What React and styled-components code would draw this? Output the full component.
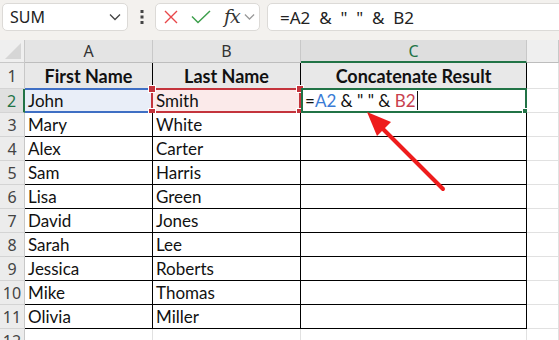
import styled, { createGlobalStyle } from 'styled-components'

const GlobalStyle = createGlobalStyle`
    html, body {
        margin: 0;
        padding: 0;
        background: #ffffff;
        overflow: hidden;
    }
    body {
        font-family: 'Noto Sans', 'Open Sans', sans-serif;
    }
`

const people = [
    ['John', 'Smith'],
    ['Mary', 'White'],
    ['Alex', 'Carter'],
    ['Sam', 'Harris'],
    ['Lisa', 'Green'],
    ['David', 'Jones'],
    ['Sarah', 'Lee'],
    ['Jessica', 'Roberts'],
    ['Mike', 'Thomas'],
    ['Olivia', 'Miller'],
]

const Chevron = ({ color = '#444', size = 12 }) => (
    <svg width={size} height={size / 2 + 2} viewBox='0 0 12 8'>
        <path d='M1 1.5 L6 6.5 L11 1.5' fill='none' stroke={color} strokeWidth='1.3' />
    </svg>
)

export default function App() {
    return (
        <Page>
            <GlobalStyle />
            <Toolbar>
                <NameBox>
                    <span>SUM</span>
                    <Chevron />
                </NameBox>
                <Dots>
                    <svg width='4' height='16' viewBox='0 0 4 16'>
                        <rect x='0.5' y='1' width='3' height='3' fill='#444' />
                        <rect x='0.5' y='6.5' width='3' height='3' fill='#444' />
                        <rect x='0.5' y='12' width='3' height='3' fill='#444' />
                    </svg>
                </Dots>
                <FxGroup>
                    <svg width='16' height='16' viewBox='0 0 16 16'>
                        <path d='M2 2 L14 14 M14 2 L2 14' stroke='#e8474a' strokeWidth='1.4' />
                    </svg>
                    <svg width='20' height='14' viewBox='0 0 20 14'>
                        <path d='M1 6.5 L7 12.5 L19 1' fill='none' stroke='#3d9f4c' strokeWidth='1.5' />
                    </svg>
                    <FxLabel>fx</FxLabel>
                    <Chevron color='#999' size={11} />
                </FxGroup>
                <FormulaInput>=A2  &amp;  "  "  &amp;  B2</FormulaInput>
            </Toolbar>

            <Sheet>
                <Corner>
                    <svg width='16' height='16' viewBox='0 0 16 16'>
                        <path d='M16 0 L16 16 L0 16 Z' fill='#d6d6d6' />
                    </svg>
                </Corner>
                <ColHead>A</ColHead>
                <ColHead>B</ColHead>
                <ColHead $active>C</ColHead>
                <ColHead $outside />

                <RowHead>1</RowHead>
                <HeadCell>First Name</HeadCell>
                <HeadCell>Last Name</HeadCell>
                <HeadCell>Concatenate Result</HeadCell>
                <Cell $outside />

                {people.map(([first, last], i) => {
                    const row = i + 2
                    const current = row === 2
                    return [
                        <RowHead key={`h${row}`} $active={current}>{row}</RowHead>,
                        <Cell key={`a${row}`} $fill={current ? '#e9eef8' : undefined}>
                            {current && <BlueBand />}
                            {first}
                        </Cell>,
                        <Cell key={`b${row}`} $fill={current ? '#fbeaea' : undefined}>
                            {current && (
                                <RedFrame>
                                    <Handle $color='#c4343c' $x='left' $y='top' />
                                    <Handle $color='#c4343c' $x='left' $y='bottom' />
                                    <Handle $color='#c4343c' $x='right' $y='top' />
                                    <Handle $color='#c4343c' $x='right' $y='bottom' />
                                </RedFrame>
                            )}
                            {last}
                        </Cell>,
                        <Cell key={`c${row}`}>
                            {current && (
                                <>
                                    <GreenFrame>
                                        <Handle $color='#217346' $x='right' $y='bottom' />
                                    </GreenFrame>
                                    <Formula>
                                        =<Ref $color='#3a7bd5'>A2</Ref> &amp; " " &amp; <Ref $color='#c8404e'>B2</Ref>
                                        <Caret />
                                    </Formula>
                                </>
                            )}
                        </Cell>,
                        <Cell key={`d${row}`} $outside />,
                    ]
                })}

                <RowHead>12</RowHead>
                <Cell $outside $open />
                <Cell $outside $open />
                <Cell $outside $open />
                <Cell $outside $open />
            </Sheet>

            <Arrow width='559' height='340' viewBox='0 0 559 340'>
                <line x1='443' y1='189' x2='380' y2='126' stroke='#ee1c1c' strokeWidth='4' strokeLinecap='round' />
                <polygon points='367,112 391,122 377,136' fill='#ee1c1c' />
            </Arrow>
        </Page>
    )
}

const Page = styled.div`
    position: relative;
    width: 559px;
    height: 340px;
    overflow: hidden;
`

const Toolbar = styled.div`
    height: 40px;
    box-sizing: border-box;
    display: flex;
    align-items: flex-start;
    padding: 3px 0 0 2px;
    background: #f3f1ee;
`

const NameBox = styled.div`
    width: 126px;
    height: 28px;
    box-sizing: border-box;
    display: flex;
    align-items: center;
    justify-content: space-between;
    padding: 0 6px 0 7px;
    background: #ffffff;
    border: 1px solid #dcdad7;
    border-radius: 5px;
    font-size: 16px;
    color: #222;
`

const Dots = styled.div`
    width: 27px;
    height: 28px;
    display: flex;
    align-items: center;
    justify-content: center;
`

const FxGroup = styled.div`
    width: 105px;
    height: 28px;
    box-sizing: border-box;
    display: flex;
    align-items: center;
    gap: 10px;
    padding: 0 0 0 7px;
    background: #ffffff;
    border: 1px solid #dcdad7;
    border-radius: 5px;

    svg:nth-child(2) {
        margin-left: 2px;
    }
`

const FxLabel = styled.span`
    font-family: 'DejaVu Serif', 'Liberation Serif', serif;
    font-style: italic;
    font-size: 19px;
    color: #333;
    margin-left: 3px;
    margin-right: -6px;
    letter-spacing: -1px;
    line-height: 1;
    padding-bottom: 2px;
`

const FormulaInput = styled.div`
    flex: 1;
    height: 28px;
    box-sizing: border-box;
    margin-left: 7px;
    margin-right: -8px;
    padding: 0 0 0 12px;
    display: flex;
    align-items: center;
    background: #ffffff;
    border: 1px solid #dcdad7;
    border-radius: 5px;
    font-size: 17px;
    color: #222;
    white-space: pre;
`

const Sheet = styled.div`
    display: grid;
    grid-template-columns: 25px 128px 148px 226px 1fr;
    grid-template-rows: 23px 26px repeat(10, 24px) 24px;
    font-family: Lato, 'Open Sans', sans-serif;
`

const Corner = styled.div`
    display: flex;
    align-items: flex-end;
    justify-content: flex-end;
    padding: 0 3px 3px 0;
    background: #efefef;
    border-right: 1px solid #c8c8c8;
    border-bottom: 1px solid #c8c8c8;
`

const ColHead = styled.div`
    display: flex;
    align-items: center;
    justify-content: center;
    background: ${({ $active, $outside }) => ($active ? '#dedede' : $outside ? '#efefef' : '#e4e4e4')};
    color: ${({ $active }) => ($active ? '#217346' : '#333')};
    border-right: 1px solid #c8c8c8;
    border-bottom: ${({ $active }) => ($active ? '2px solid #217346' : '1px solid #bdbdbd')};
    font-family: 'Noto Sans', sans-serif;
    font-size: 16px;
`

const RowHead = styled.div`
    display: flex;
    align-items: center;
    justify-content: center;
    background: ${({ $active }) => ($active ? '#e0e0e0' : '#ececec')};
    color: ${({ $active }) => ($active ? '#217346' : '#444')};
    border-right: ${({ $active }) => ($active ? '2px solid #217346' : '1px solid #c8c8c8')};
    border-bottom: 1px solid #d4d4d4;
    font-family: 'Noto Sans', sans-serif;
    font-size: 16px;
`

const Cell = styled.div`
    position: relative;
    display: flex;
    align-items: center;
    padding-left: 3px;
    background: ${({ $fill }) => $fill || '#ffffff'};
    border-right: 1px solid ${({ $outside }) => ($outside ? '#e1e1e1' : '#000')};
    border-bottom: ${({ $outside, $open }) => ($open ? 'none' : `1px solid ${$outside ? '#e1e1e1' : '#000'}`)};
    font-size: 17px;
    color: #111;
    white-space: nowrap;
`

const HeadCell = styled(Cell)`
    justify-content: center;
    padding-left: 0;
    background: #e8e8e8;
    font-weight: bold;
    font-size: 18px;
`

const BlueBand = styled.div`
    position: absolute;
    inset: -1px -1px -1px 0;
    border-top: 2px solid #3f6fc4;
    border-bottom: 2px solid #3f6fc4;
    pointer-events: none;
`

const RedFrame = styled.div`
    position: absolute;
    inset: -1px -1px -1px -2px;
    border: 2px solid #c4343c;
    pointer-events: none;
`

const GreenFrame = styled.div`
    position: absolute;
    inset: -1px -1px -1px 0;
    border: 2px solid #217346;
    pointer-events: none;
`

const Handle = styled.span`
    position: absolute;
    width: 6px;
    height: 6px;
    background: ${({ $color }) => $color};
    border: 1px solid #ffffff;
    ${({ $x }) => ($x === 'left' ? 'left: -5px;' : 'right: -5px;')}
    ${({ $y }) => ($y === 'top' ? 'top: -5px;' : 'bottom: -5px;')}
`

const Formula = styled.div`
    display: flex;
    align-items: center;
    white-space: pre;
    padding-left: 1px;
`

const Ref = styled.span`
    color: ${({ $color }) => $color};
`

const Caret = styled.span`
    width: 1px;
    height: 19px;
    margin-left: 1px;
    background: #111;
`

const Arrow = styled.svg`
    position: absolute;
    left: 0;
    top: 0;
    pointer-events: none;
`
